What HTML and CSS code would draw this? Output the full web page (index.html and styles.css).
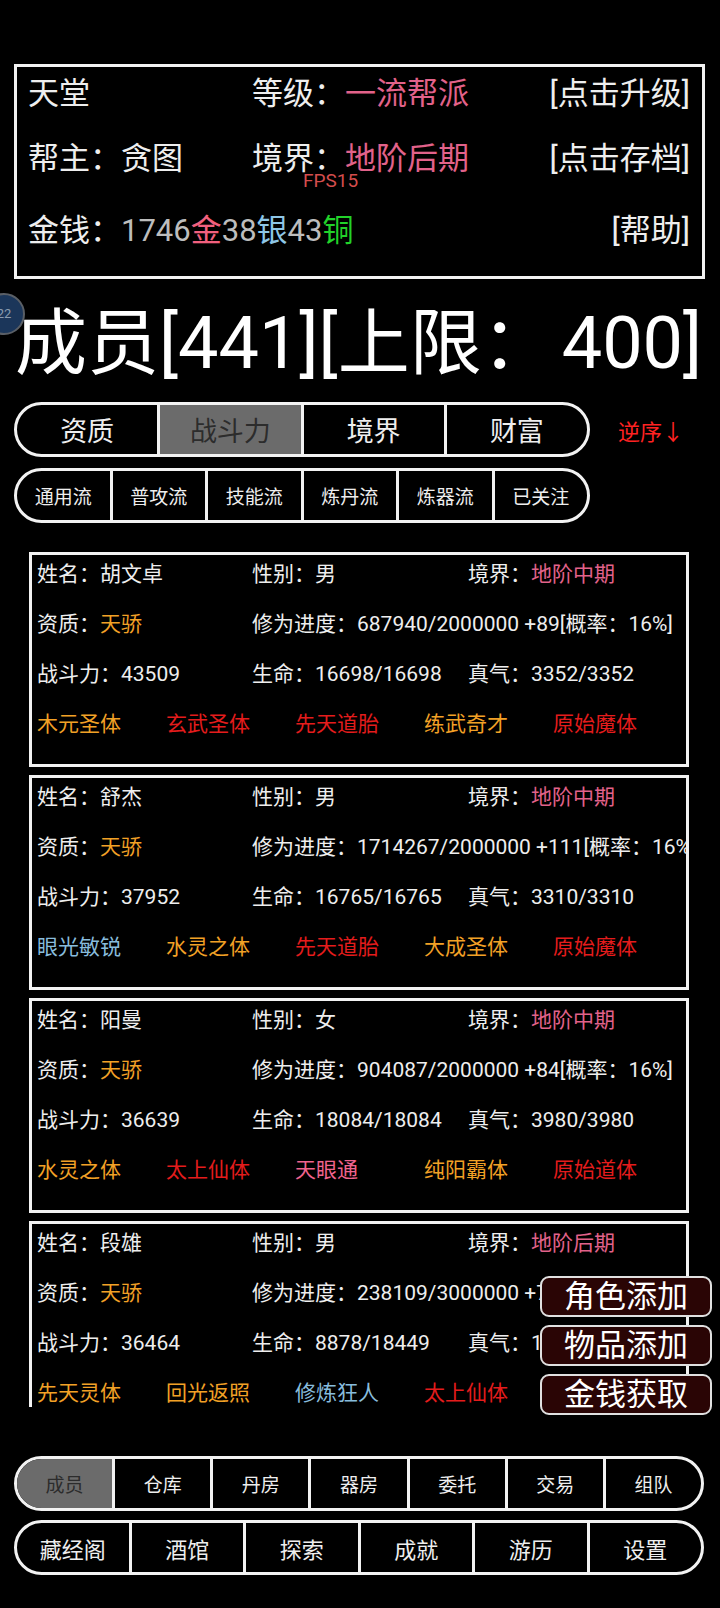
FILE: index.html
```html
<!DOCTYPE html>
<html lang="zh">
<head>
    <meta charset="UTF-8">
    <title>成员</title>
    <link rel="stylesheet" href="styles.css">
</head>
<body>
<div class="badge">22</div>

<div class="info">
    <div class="info-row">
        <span>天堂</span>
        <span>等级：<em class="rose">一流帮派</em></span>
        <span class="link">[点击升级]</span>
    </div>
    <div class="info-row row2">
        <span>帮主：贪图</span>
        <span>境界：<em class="rose">地阶后期</em></span>
        <span class="link">[点击存档]</span>
    </div>
    <div class="info-row row3">
        <span>金钱：<em class="grey">1746</em><em class="gold">金</em><em class="grey">38</em><em class="silver">银</em><em class="grey">43</em><em class="copper">铜</em></span>
        <span></span>
        <span class="link">[帮助]</span>
    </div>
    <div class="fps">FPS15</div>
</div>

<div class="title">成员[441][上限：<span class="limit">400]</span></div>

<div class="sort-line">
    <div class="pill sort">
        <span>资质</span>
        <span class="on">战斗力</span>
        <span>境界</span>
        <span>财富</span>
    </div>
    <span class="reverse">逆序↓</span>
</div>

<div class="pill filter">
    <span>通用流</span>
    <span>普攻流</span>
    <span>技能流</span>
    <span>炼丹流</span>
    <span>炼器流</span>
    <span>已关注</span>
</div>

<div class="list">
    <div class="card">
        <div class="row"><span>姓名：胡文卓</span><span>性别：男</span><span>境界：<em class="rose">地阶中期</em></span></div>
        <div class="row"><span>资质：<em class="orange">天骄</em></span><span class="wide">修为进度：687940/2000000 +89[概率：16%]</span></div>
        <div class="row"><span>战斗力：43509</span><span>生命：16698/16698</span><span>真气：3352/3352</span></div>
        <div class="traits"><span class="orange">木元圣体</span><span class="red">玄武圣体</span><span class="red">先天道胎</span><span class="orange">练武奇才</span><span class="red">原始魔体</span></div>
    </div>
    <div class="card">
        <div class="row"><span>姓名：舒杰</span><span>性别：男</span><span>境界：<em class="rose">地阶中期</em></span></div>
        <div class="row"><span>资质：<em class="orange">天骄</em></span><span class="wide">修为进度：1714267/2000000 +111[概率：16%]</span></div>
        <div class="row"><span>战斗力：37952</span><span>生命：16765/16765</span><span>真气：3310/3310</span></div>
        <div class="traits"><span class="blue">眼光敏锐</span><span class="orange">水灵之体</span><span class="red">先天道胎</span><span class="orange">大成圣体</span><span class="red">原始魔体</span></div>
    </div>
    <div class="card">
        <div class="row"><span>姓名：阳曼</span><span>性别：女</span><span>境界：<em class="rose">地阶中期</em></span></div>
        <div class="row"><span>资质：<em class="orange">天骄</em></span><span class="wide">修为进度：904087/2000000 +84[概率：16%]</span></div>
        <div class="row"><span>战斗力：36639</span><span>生命：18084/18084</span><span>真气：3980/3980</span></div>
        <div class="traits"><span class="orange">水灵之体</span><span class="red">太上仙体</span><span class="pink">天眼通</span><span class="orange">纯阳霸体</span><span class="red">原始道体</span></div>
    </div>
    <div class="card">
        <div class="row"><span>姓名：段雄</span><span>性别：男</span><span>境界：<em class="rose">地阶后期</em></span></div>
        <div class="row"><span>资质：<em class="orange">天骄</em></span><span class="wide">修为进度：238109/3000000 +76[概率：16%]</span></div>
        <div class="row"><span>战斗力：36464</span><span>生命：8878/18449</span><span>真气：1845/1845</span></div>
        <div class="traits"><span class="orange">先天灵体</span><span class="orange">回光返照</span><span class="blue">修炼狂人</span><span class="red">太上仙体</span><span class="red">原始魔体</span></div>
    </div>
</div>

<div class="tools">
    <span>角色添加</span>
    <span>物品添加</span>
    <span>金钱获取</span>
</div>

<div class="pill nav1">
    <span class="on">成员</span>
    <span>仓库</span>
    <span>丹房</span>
    <span>器房</span>
    <span>委托</span>
    <span>交易</span>
    <span>组队</span>
</div>
<div class="pill nav2">
    <span>藏经阁</span>
    <span>酒馆</span>
    <span>探索</span>
    <span>成就</span>
    <span>游历</span>
    <span>设置</span>
</div>
</body>
</html>
```
FILE: styles.css
```css
*{
    box-sizing: border-box;
}
body{
    margin: 0;
    background: #000;
    color: #eeeeee;
    font-family: Roboto, "Noto Sans CJK SC", sans-serif;
    width: 720px;
    height: 1608px;
    position: relative;
    overflow: hidden;
}
em{
    font-style: normal;
}
.rose{ color: #e2628a; }
.grey{ color: #bdbdbd; }
.gold{ color: #f2607e; }
.silver{ color: #8ec6e6; }
.copper{ color: #22d22a; }
.orange{ color: #f2a126; }
.red{ color: #e41c1c; }
.blue{ color: #88bcdc; }
.pink{ color: #f0648e; }

/* 左边半露出的小圆点 */
.badge{
    position: absolute;
    left: -17px;
    top: 293px;
    width: 42px;
    height: 42px;
    border-radius: 50%;
    background: #1b365a;
    border: 2px solid #5a5f66;
    color: #8a9bb0;
    font-size: 13px;
    line-height: 38px;
    text-align: center;
}

/* 帮派信息 */
.info{
    position: relative;
    margin: 64px 0 0 14px;
    width: 691px;
    height: 215px;
    border: 3px solid #f2f2f2;
    padding: 7px 12px 0 11px;
    font-size: 31px;
}
.info-row{
    display: grid;
    grid-template-columns: 224px 1fr auto;
    height: 40px;
    line-height: 40px;
    white-space: nowrap;
}
.info-row.row2{
    margin-top: 25px;
}
.info-row.row3{
    margin-top: 32px;
}
.fps{
    position: absolute;
    left: 286px;
    top: 104px;
    font-size: 19px;
    line-height: 20px;
    color: #d44d4d;
}

.title{
    margin-top: 25px;
    padding-left: 15px;
    height: 80px;
    line-height: 80px;
    font-size: 72px;
    color: #fff;
    white-space: nowrap;
}
.title .limit{
    margin-left: 8px;
}

/* 圆角按钮条 */
.pill{
    display: flex;
    height: 55px;
    border: 3px solid #f2f2f2;
    border-radius: 28px;
    overflow: hidden;
}
.pill span{
    flex: 1;
    display: flex;
    align-items: center;
    justify-content: center;
    border-left: 3px solid #f2f2f2;
    white-space: nowrap;
}
.pill span:first-child{
    border-left: none;
}
.pill .on{
    background: #6b6b6b;
    color: #2c2c2c;
}

.sort-line{
    display: flex;
    align-items: center;
    margin: 18px 0 0 14px;
}
.sort{
    width: 576px;
    font-size: 27px;
}
.reverse{
    margin-left: 28px;
    color: #ff2222;
    font-size: 22px;
}
.filter{
    width: 576px;
    margin: 11px 0 0 14px;
    font-size: 19px;
}

/* 成员列表 */
.list{
    margin: 29px 0 0 29px;
    width: 660px;
    height: 855px;
    overflow: hidden;
}
.card{
    height: 215px;
    border: 3px solid #f2f2f2;
    margin-bottom: 8px;
    padding: 1px 0 0 5px;
    overflow: hidden;
    font-size: 21px;
    display: flex;
    flex-direction: column;
    gap: 14px;
}
.card .row{
    display: grid;
    grid-template-columns: 215px 216px 1fr;
    line-height: 36px;
    height: 36px;
    white-space: nowrap;
}
.card .wide{
    grid-column: 2 / 4;
}
.traits{
    display: flex;
    line-height: 36px;
    height: 36px;
    white-space: nowrap;
}
.traits span{
    width: 129px;
    flex: none;
}

/* 右下角工具按钮 */
.tools{
    position: absolute;
    top: 1276px;
    left: 540px;
    display: flex;
    flex-direction: column;
    gap: 8px;
}
.tools span{
    width: 172px;
    height: 41px;
    line-height: 37px;
    text-align: center;
    background: #2a0505;
    border: 2px solid #e0e0e0;
    border-radius: 9px;
    font-size: 31px;
    color: #fff;
}

.nav1{
    width: 690px;
    margin: 49px 0 0 14px;
    font-size: 19px;
}
.nav2{
    width: 690px;
    margin: 9px 0 0 14px;
    font-size: 22px;
}
```
